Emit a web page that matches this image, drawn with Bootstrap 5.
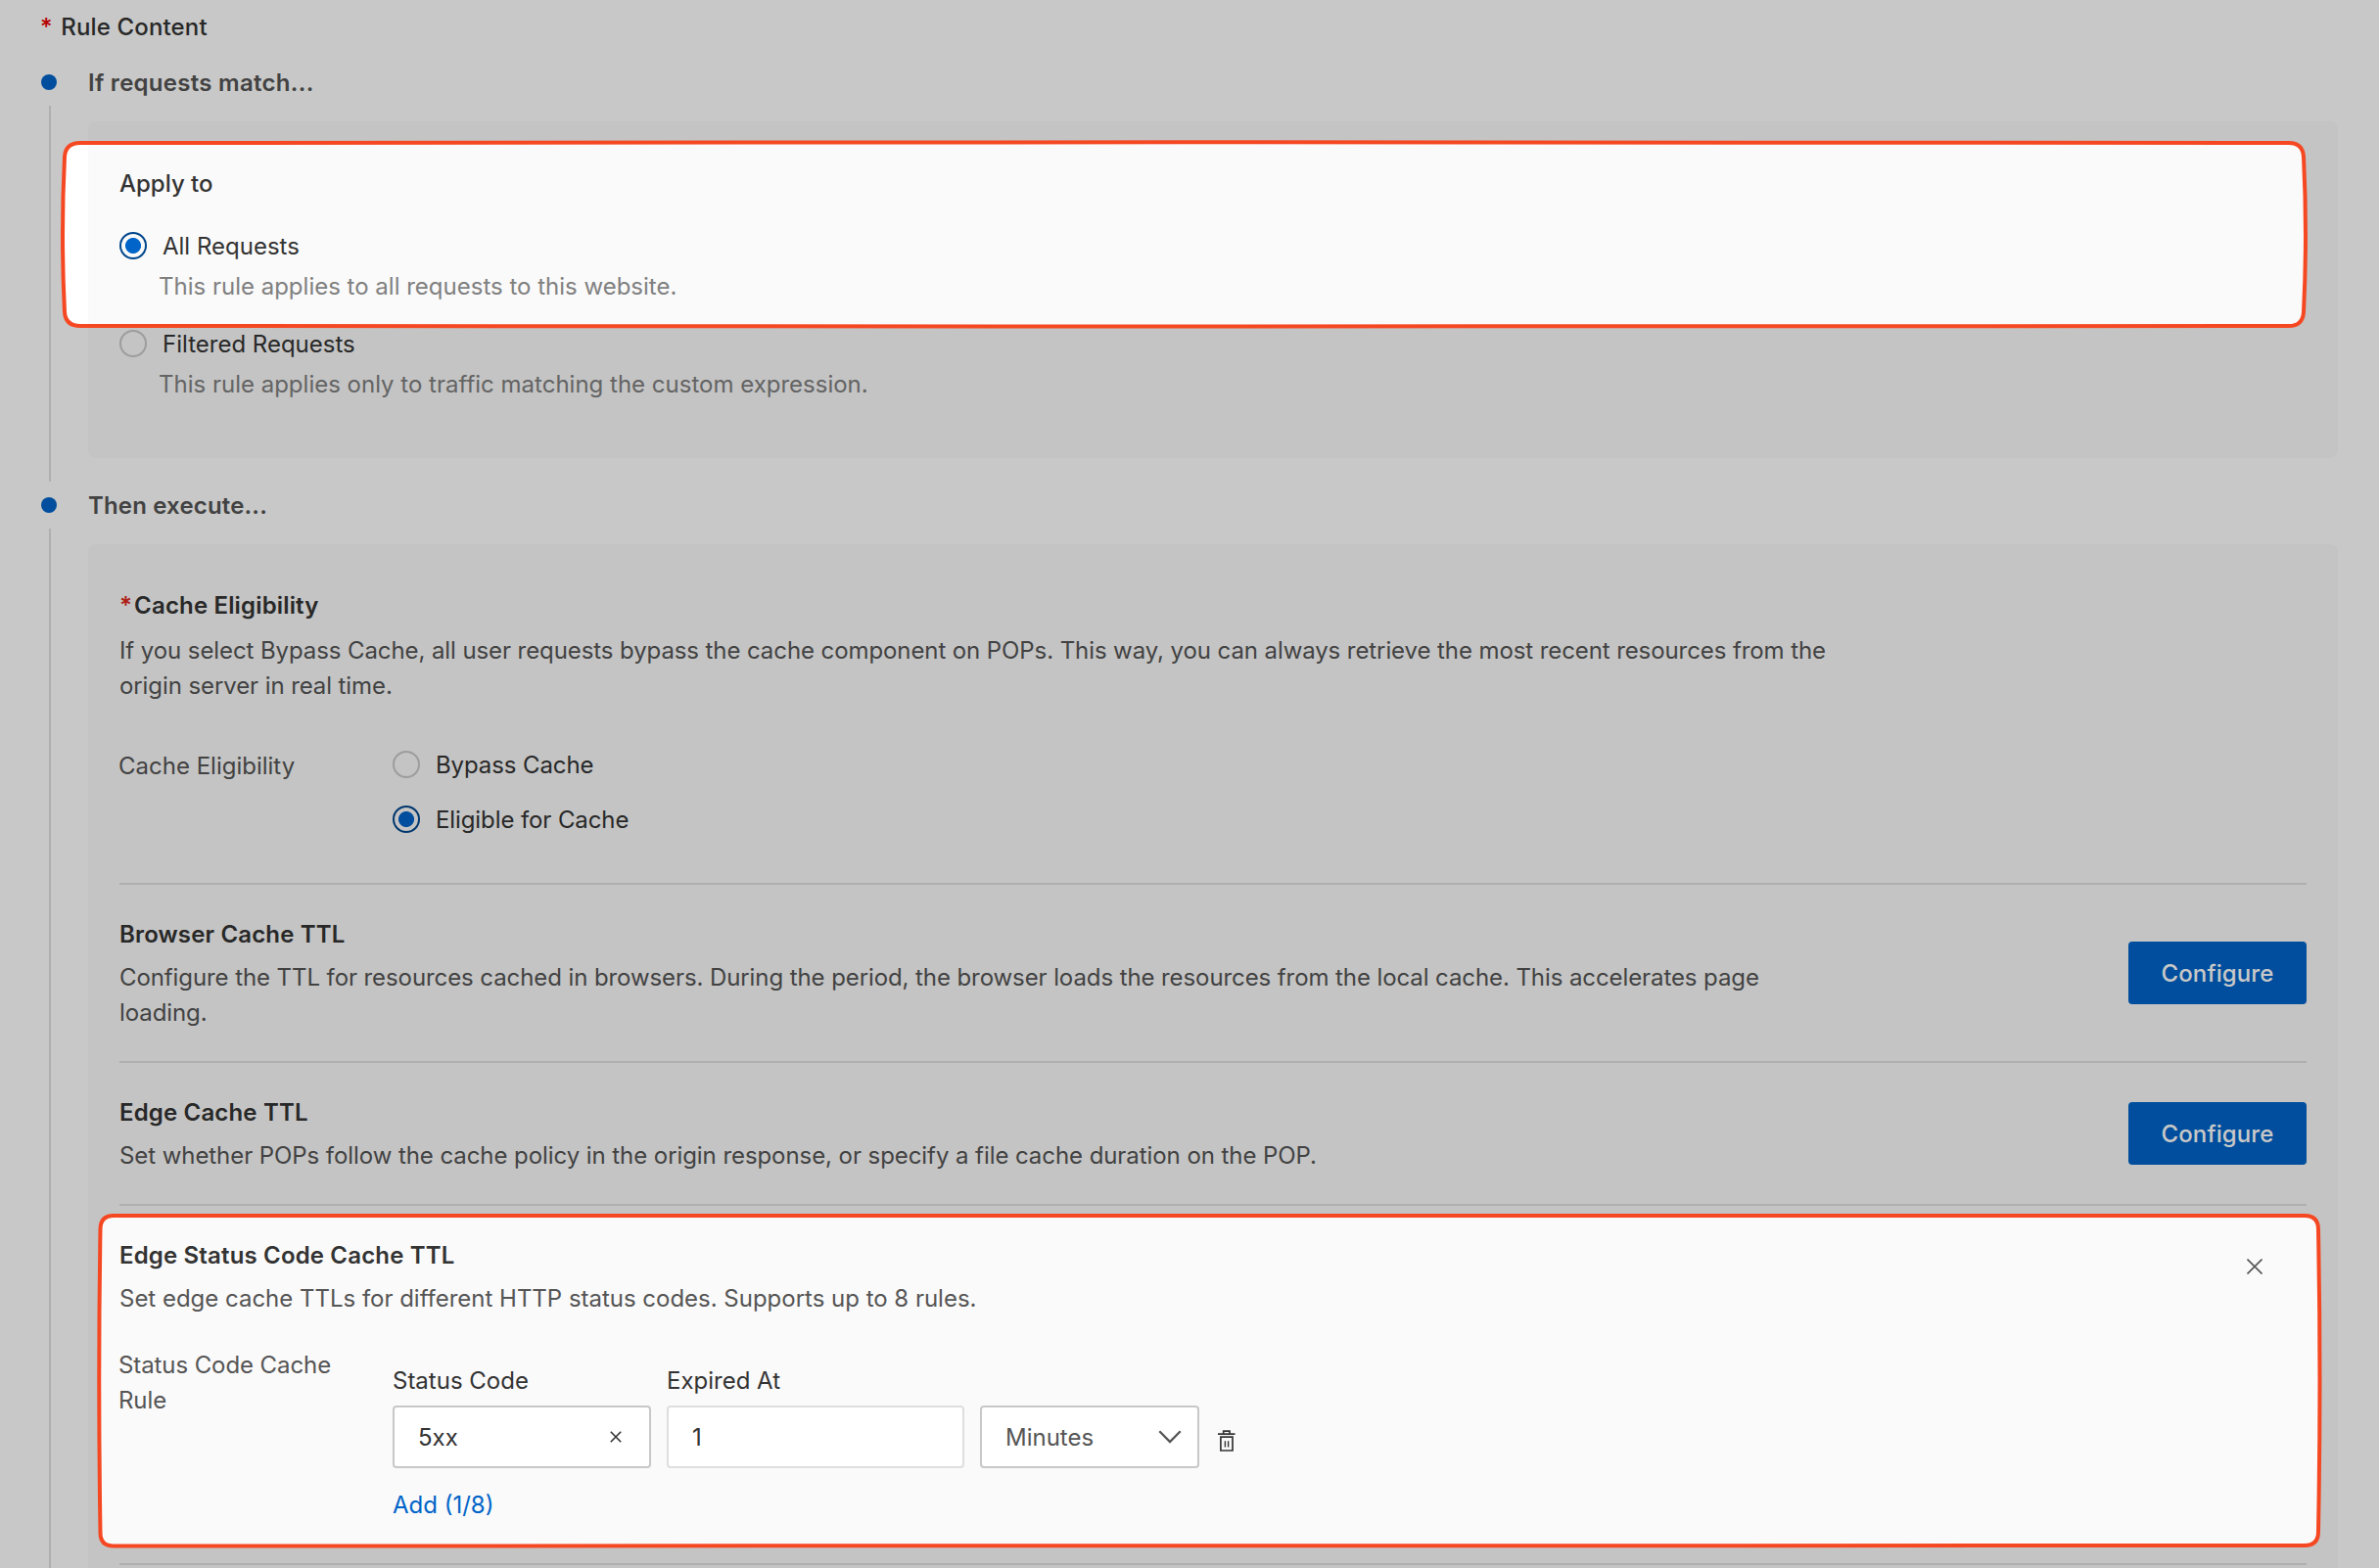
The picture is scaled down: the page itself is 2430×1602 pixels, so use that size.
<!DOCTYPE html>
<html lang="en">
<head>
<meta charset="utf-8">
<meta name="viewport" content="width=device-width, initial-scale=1">
<title>Cache rule</title>
<link href="https://cdn.jsdelivr.net/npm/bootstrap@5.3.0/dist/css/bootstrap.min.css" rel="stylesheet">
<style>
html{overflow:hidden}
body{width:2430px;height:1602px;overflow:hidden;background:#fff;font-family:Inter,"Liberation Sans",sans-serif;font-size:24px;line-height:36px;color:#333;letter-spacing:0}
.page-top{height:55px;padding:10px 0 0 41px;letter-spacing:.15px}
.page-top .star{margin-right:2px}
.star{color:#e80000}
.star-inline{color:#e02820;margin-right:2px}
.step-if{height:432px}
.step-then{height:1115px}
.step-col{width:90px}
.step-dot{width:16px;height:16px;border-radius:50%;background:#0064c8;margin:21px 0 0 42px}
.step-line{width:2px;background:#e0e0e0;margin:16px 0 0 50px}
.step-if .step-line{margin-bottom:-5px}
.step-head{height:69px;padding-top:12px;color:#555}
.panel{background:#fafafa;border-radius:8px;width:2298px;padding:0 32px}
.panel-if{height:344px;padding-top:46px}
.panel-then{height:1100px}
.soft{color:#555}
.desc{letter-spacing:-.09px}
.hint{color:#808080;padding-left:40px;margin-top:6px;letter-spacing:0}
.fw-semi{font-weight:600;letter-spacing:.16px}
.step-if .step-head{letter-spacing:.28px}
.opt{gap:16px;height:36px}
.opt-radio{width:28px;height:28px;border:2px solid #c8c8c8;border-radius:50%;flex:none}
.opt-radio.on{border-color:#00468c;background:radial-gradient(circle,#0064c8 0 7.6px,transparent 8.4px)}
.opt-text{padding-top:1px}
.section-elig .opt-text{letter-spacing:-.1px}
.section{border-top:2px solid #e0e0e0}
.section-text{padding-top:33px}
.section-elig{height:346px;padding-top:45px}
.section-browser{height:182px}
.section-edge{height:146px}
.section-status{height:367px}
.btn-conf{--bs-btn-bg:#0064c8;--bs-btn-color:#fff;--bs-btn-border-width:0;width:182px;height:64px;border-radius:4px;font-size:24px;font-weight:500;letter-spacing:.1px;padding:1px 0 0;margin-top:58px}
.section-edge .btn-conf{margin-top:40px}
.lbl{width:280px;margin-left:-1px}
.fld{height:64px;border:2px solid #c8c8c8;border-radius:4px;background:#fff;padding-left:24px}
.fld span{padding-top:2px}
.fld-code{width:264px;padding-right:28px}
.fld-time{width:304px;border-color:#dedede}
.fld-unit{width:224px;padding-right:16px}
.ico-close{margin:21px 45px 0 0}
.ico-trash{margin:25px 0 0 3px}
.add-link{margin-top:20px;color:#0064c8}
.shade{position:absolute;left:0;top:0;pointer-events:none}
</style>
<script src="https://cdn.jsdelivr.net/npm/bootstrap@5.3.0/dist/js/bootstrap.bundle.min.js"></script>
</head>
<body class="position-relative">
<div class="page-top fw-medium"><span class="star">*</span> Rule Content</div>

<div class="step-if d-flex">
  <div class="step-col d-flex flex-column"><div class="step-dot"></div><div class="step-line flex-grow-1"></div></div>
  <div>
    <div class="step-head fw-semi">If requests match...</div>
    <div class="panel panel-if">
      <div class="fw-medium">Apply to</div>
      <div class="opt d-flex align-items-center" style="margin-top:27px"><span class="opt-radio on"></span><span class="opt-text">All Requests</span></div>
      <div class="hint">This rule applies to all requests to this website.</div>
      <div class="opt d-flex align-items-center" style="margin-top:22px"><span class="opt-radio"></span><span class="opt-text">Filtered Requests</span></div>
      <div class="hint">This rule applies only to traffic matching the custom expression.</div>
    </div>
  </div>
</div>

<div class="step-then d-flex">
  <div class="step-col d-flex flex-column"><div class="step-dot"></div><div class="step-line flex-grow-1"></div></div>
  <div>
    <div class="step-head fw-semi">Then execute...</div>
    <div class="panel panel-then">
      <div class="section-elig">
        <div class="fw-semi"><span class="star-inline">*</span>Cache Eligibility</div>
        <div class="soft desc" style="margin-top:10px">If you select Bypass Cache, all user requests bypass the cache component on POPs. This way, you can always retrieve the most recent resources from the<br>origin server in real time.</div>
        <div class="d-flex" style="margin-top:44px">
          <div class="lbl soft pt-1"><span class="d-block" style="line-height:32px">Cache Eligibility</span></div>
          <div>
            <div class="opt d-flex align-items-center"><span class="opt-radio"></span><span class="opt-text">Bypass Cache</span></div>
            <div class="opt d-flex align-items-center" style="margin-top:20px"><span class="opt-radio on"></span><span class="opt-text">Eligible for Cache</span></div>
          </div>
        </div>
      </div>
      <div class="section section-browser d-flex justify-content-between align-items-start">
        <div class="section-text">
          <div class="fw-semi">Browser Cache TTL</div>
          <div class="soft desc mt-2">Configure the TTL for resources cached in browsers. During the period, the browser loads the resources from the local cache. This accelerates page<br>loading.</div>
        </div>
        <button type="button" class="btn btn-conf">Configure</button>
      </div>
      <div class="section section-edge d-flex justify-content-between align-items-start">
        <div class="section-text">
          <div class="fw-semi">Edge Cache TTL</div>
          <div class="soft mt-2" style="letter-spacing:-.07px">Set whether POPs follow the cache policy in the origin response, or specify a file cache duration on the POP.</div>
        </div>
        <button type="button" class="btn btn-conf">Configure</button>
      </div>
      <div class="section section-status section-text">
        <div class="d-flex justify-content-between">
          <div>
            <div class="fw-semi">Edge Status Code Cache TTL</div>
            <div class="soft mt-2" style="letter-spacing:-.015px">Set edge cache TTLs for different HTTP status codes. Supports up to 8 rules.</div>
          </div>
          <svg class="ico-close" width="16" height="16" viewBox="0 0 16 16" fill="none" stroke="#555" stroke-width="1.6"><path d="M.5.5l15 15M15.500.5l-15 15"/></svg>
        </div>
        <div class="d-flex" style="margin-top:32px">
          <div class="lbl soft desc">Status Code Cache<br>Rule</div>
          <div class="pt-3">
            <div class="d-flex"><div style="width:280px">Status Code</div><div>Expired At</div></div>
            <div class="d-flex gap-3" style="margin-top:7px">
              <div class="fld fld-code d-flex align-items-center justify-content-between"><span>5xx</span><svg width="12" height="12" viewBox="0 0 12 12" fill="none" stroke="#333" stroke-width="1.6"><path d="M.8.8l10.400 10.400M11.200.8L.8 11.200"/></svg></div>
              <div class="fld fld-time d-flex align-items-center"><span>1</span></div>
              <div class="fld fld-unit d-flex align-items-center justify-content-between soft"><span>Minutes</span><svg width="24" height="14" viewBox="0 0 24 14" fill="none" stroke="#555" stroke-width="2.3"><path d="M1.300 1.200L12 12l10.700-10.800"/></svg></div>
              <svg class="ico-trash" width="18" height="22" viewBox="0 0 18 22" fill="none" stroke="#333" stroke-width="1.7"><path d="M0 4.200H17.500M5.700 4V1.200H12V4M2.900 7.100V21H15V7.100Z"/><path stroke-width="1.4" d="M7.400 11.200v6.200M10.600 11.200v6.200"/></svg>
            </div>
            <div class="add-link">Add (1/8)</div>
          </div>
        </div>
      </div>
      <div class="section"></div>
    </div>
  </div>
</div>

<svg class="shade" width="2430" height="1602" viewBox="0 0 2430 1602">
<path fill="#000" fill-opacity=".216" fill-rule="evenodd" d="M0 0H2430V1602H0ZM82 146Q1210 144.500 2338 146Q2352 146 2353 160Q2357 240 2353 319Q2352 333 2338 333Q1210 334 82 333Q67 333 66 319Q62 240 66 160Q67 146 82 146ZM116 1242Q1236 1240 2354 1242Q2368 1242 2368 1256Q2371 1410 2368 1565Q2368 1579 2354 1579Q1236 1580 116 1579.500Q102.500 1579.500 102.500 1566Q100 1410 102.500 1256Q102.500 1242 116 1242Z"/>
<g fill="none" stroke="#f54822" stroke-width="4"><path d="M82 146Q1210 144.500 2338 146Q2352 146 2353 160Q2357 240 2353 319Q2352 333 2338 333Q1210 334 82 333Q67 333 66 319Q62 240 66 160Q67 146 82 146Z"/><path d="M116 1242Q1236 1240 2354 1242Q2368 1242 2368 1256Q2371 1410 2368 1565Q2368 1579 2354 1579Q1236 1580 116 1579.500Q102.500 1579.500 102.500 1566Q100 1410 102.500 1256Q102.500 1242 116 1242Z"/></g>
</svg>
</body>
</html>
